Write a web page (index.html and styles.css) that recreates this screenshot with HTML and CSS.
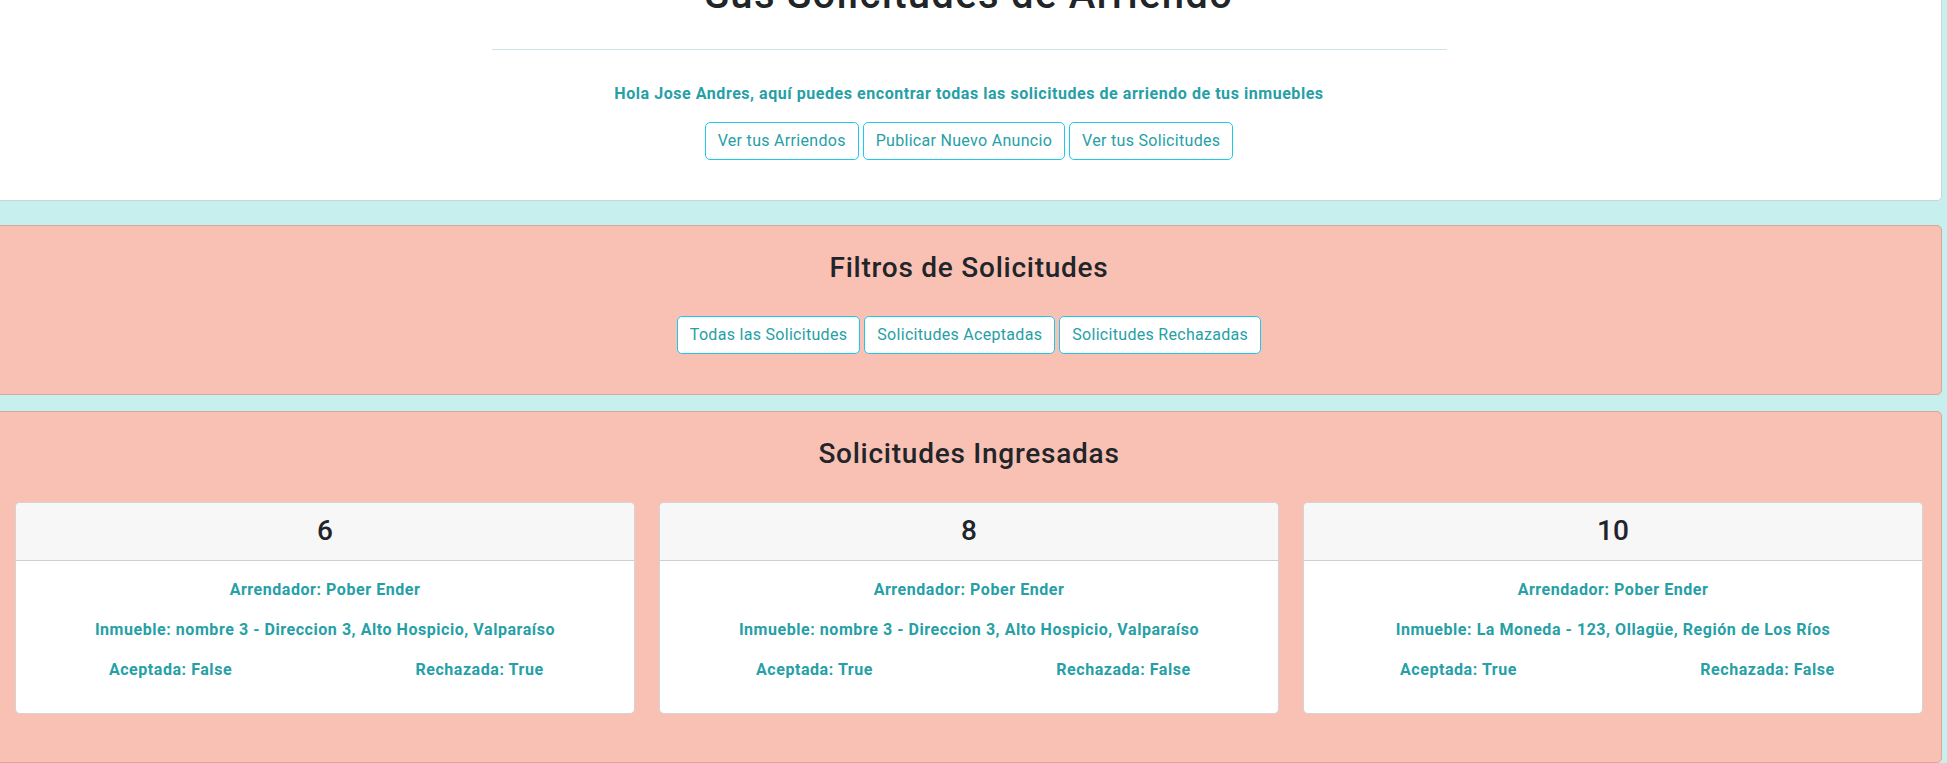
FILE: index.html
```html
<!DOCTYPE html>
<html lang="es">
<head>
<meta charset="utf-8">
<title>Sus Solicitudes de Arriendo</title>
<link rel="stylesheet" href="styles.css">
</head>
<body>
<div class="page">
  <section class="panel panel-top">
    <h1 class="title">Sus Solicitudes de Arriendo</h1>
    <hr class="divider">
    <p class="greeting">Hola Jose Andres, aquí puedes encontrar todas las solicitudes de arriendo de tus inmuebles</p>
    <div class="btn-row">
      <a class="btn">Ver tus Arriendos</a>
      <a class="btn">Publicar Nuevo Anuncio</a>
      <a class="btn">Ver tus Solicitudes</a>
    </div>
  </section>

  <section class="panel panel-pink panel-filters">
    <h3 class="section-title">Filtros de Solicitudes</h3>
    <div class="btn-row btn-row-filters">
      <a class="btn">Todas las Solicitudes</a>
      <a class="btn">Solicitudes Aceptadas</a>
      <a class="btn">Solicitudes Rechazadas</a>
    </div>
  </section>

  <section class="panel panel-pink panel-list">
    <h3 class="section-title">Solicitudes Ingresadas</h3>
    <div class="cards">
      <div class="card">
        <div class="card-header"><h3 class="card-num">6</h3></div>
        <div class="card-body">
          <p class="info">Arrendador: Pober Ender</p>
          <p class="info">Inmueble: nombre 3 - Direccion 3, Alto Hospicio, Valparaíso</p>
          <div class="status-row">
            <p class="info">Aceptada: False</p>
            <p class="info">Rechazada: True</p>
          </div>
        </div>
      </div>
      <div class="card">
        <div class="card-header"><h3 class="card-num">8</h3></div>
        <div class="card-body">
          <p class="info">Arrendador: Pober Ender</p>
          <p class="info">Inmueble: nombre 3 - Direccion 3, Alto Hospicio, Valparaíso</p>
          <div class="status-row">
            <p class="info">Aceptada: True</p>
            <p class="info">Rechazada: False</p>
          </div>
        </div>
      </div>
      <div class="card">
        <div class="card-header"><h3 class="card-num">10</h3></div>
        <div class="card-body">
          <p class="info">Arrendador: Pober Ender</p>
          <p class="info">Inmueble: La Moneda - 123, Ollagüe, Región de Los Ríos</p>
          <div class="status-row">
            <p class="info">Aceptada: True</p>
            <p class="info">Rechazada: False</p>
          </div>
        </div>
      </div>
    </div>
  </section>
</div>
</body>
</html>
```

FILE: styles.css
```css
html, body {
  margin: 0;
  padding: 0;
  background: #c7efed;
  overflow: hidden;
}

body {
  font-family: Roboto, "Liberation Sans", sans-serif;
  font-size: 16px;
  line-height: 24px;
  color: #212529;
}

.page {
  margin: 0 5px 0 -4px;
}

.panel {
  border-radius: 5px;
  text-align: center;
}

.panel-top {
  background: #ffffff;
  border: 1px solid #d2d2d2;
  border-top: none;
  margin-top: -53px;
  padding: 24px 0 40px;
}

.title {
  margin: 0;
  font-size: 40px;
  line-height: 48px;
  font-weight: 500;
  letter-spacing: 1.3px;
  color: #212529;
}

.divider {
  width: 955px;
  margin: 30px auto 0;
  border: none;
  border-top: 1px solid #c9e4e6;
  height: 0;
}

.greeting {
  margin: 32px 0 16px;
  font-size: 16px;
  font-weight: 700;
  letter-spacing: 0.55px;
  color: #26a0a6;
}

.btn-row {
  display: flex;
  justify-content: center;
  gap: 4px;
}

.btn {
  display: inline-block;
  padding: 6px 12px;
  font-size: 16px;
  line-height: 24px;
  letter-spacing: 0.3px;
  color: #26a0a6;
  background: #ffffff;
  border: 1px solid #1fc8ea;
  border-radius: 5px;
  cursor: pointer;
}

.panel-pink {
  background: #f9c1b4;
  border: 1px solid #d9a69a;
}

.panel-filters {
  margin-top: 24px;
  padding: 25px 18px 40px;
}

.panel-list {
  margin-top: 16px;
  padding: 25px 18px 48px;
}

.section-title {
  margin: 0;
  font-size: 28px;
  line-height: 34px;
  font-weight: 500;
  letter-spacing: 0.75px;
  color: #212529;
}

.btn-row-filters {
  margin-top: 31px;
}

.cards {
  margin-top: 31px;
  display: grid;
  grid-template-columns: repeat(3, 1fr);
  gap: 24px;
}

.card {
  background: #ffffff;
  border: 1px solid #d4d4d4;
  border-radius: 5px;
  overflow: hidden;
}

.card-header {
  background: #f7f7f7;
  border-bottom: 1px solid #cfcfcf;
  padding: 11px 0 12px;
}

.card-num {
  margin: 0;
  font-size: 28px;
  line-height: 34px;
  font-weight: 500;
  color: #212529;
}

.card-body {
  padding: 17px 15px 15px;
}

.info {
  margin: 0 0 16px;
  font-size: 16px;
  line-height: 24px;
  font-weight: 700;
  letter-spacing: 0.55px;
  color: #26a0a6;
}

.status-row {
  display: grid;
  grid-template-columns: 1fr 1fr;
  margin: 0 -15px;
}
```
